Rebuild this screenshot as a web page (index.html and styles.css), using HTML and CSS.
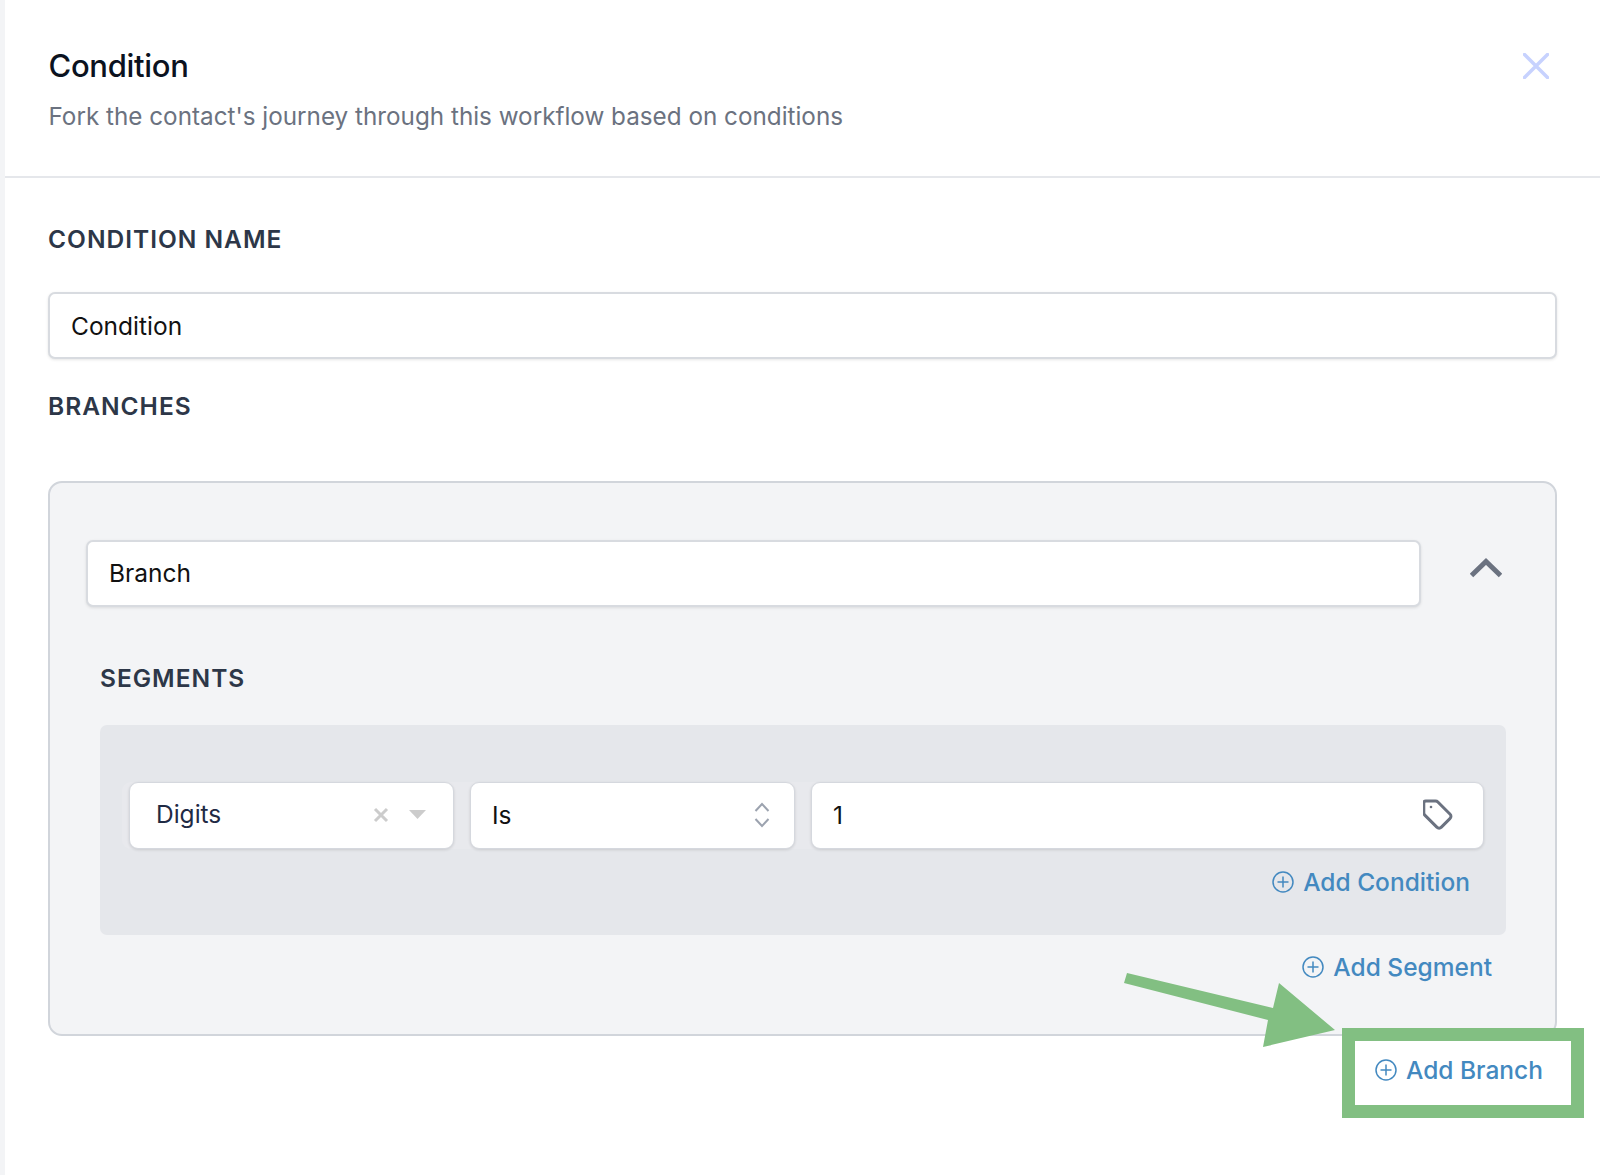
FILE: index.html
```html
<!DOCTYPE html>
<html lang="en">
<head>
<meta charset="utf-8">
<title>Condition</title>
<link rel="stylesheet" href="styles.css">
</head>
<body>
<main class="modal">
  <header class="head">
    <div>
      <h1 class="title">Condition</h1>
      <p class="sub">Fork the contact's journey through this workflow based on conditions</p>
    </div>
    <svg class="close" viewBox="0 0 26 26" aria-hidden="true"><path d="M1.5 1.5l23 23M24.5 1.5l-23 23"/></svg>
  </header>
  <section class="body">
    <div class="label">CONDITION NAME</div>
    <div class="field name">Condition</div>
    <div class="label branches">BRANCHES</div>
    <div class="panel">
      <div class="branch-row">
        <div class="field branch">Branch</div>
        <svg class="chev" viewBox="0 0 32 20" aria-hidden="true"><path d="M1.5 17.5L16 3.5l14.5 14"/></svg>
      </div>
      <div class="label segments">SEGMENTS</div>
      <div class="segbox">
        <div class="row">
          <div class="field sel digits">
            <span class="grow">Digits</span>
            <svg class="clear" viewBox="0 0 16 16" aria-hidden="true"><path d="M2 2l12 12M14 2L2 14"/></svg>
            <svg class="tri" viewBox="0 0 17 9" aria-hidden="true"><path d="M0 0h17L8.500 9z"/></svg>
          </div>
          <div class="field sel is">
            <span class="grow">Is</span>
            <svg class="sort" viewBox="0 0 16 26" aria-hidden="true"><path d="M1.500 9L8 2l6.500 7M1.500 17L8 24l6.500-7"/></svg>
          </div>
          <div class="field sel val">
            <span class="grow">1</span>
            <svg class="tag" viewBox="0 0 30 31" aria-hidden="true"><path d="M4 2h8.500c1 0 1.700.3 2.400 1l12 12c1.400 1.400 1.400 3.200 0 4.600l-8.500 8.500c-1.400 1.400-3.200 1.400-4.600 0l-12-12c-.7-.7-1-1.500-1-2.400V4c0-1.200.8-2 2-2h1.700z"/><circle class="dot" cx="8" cy="8" r="1.300"/></svg>
          </div>
        </div>
        <a class="add add-cond">
          <svg class="plus" viewBox="0 0 22 22" aria-hidden="true"><circle cx="11" cy="11" r="10"/><path d="M11 5.500v11M5.500 11h11"/></svg>
          Add Condition
        </a>
      </div>
      <a class="add add-seg">
        <svg class="plus" viewBox="0 0 22 22" aria-hidden="true"><circle cx="11" cy="11" r="10"/><path d="M11 5.500v11M5.500 11h11"/></svg>
        Add Segment
      </a>
    </div>
    <a class="add add-branch">
      <svg class="plus" viewBox="0 0 22 22" aria-hidden="true"><circle cx="11" cy="11" r="10"/><path d="M11 5.500v11M5.500 11h11"/></svg>
      Add Branch
    </a>
  </section>
</main>
<div class="callout-box"></div>
<svg class="callout-arrow" viewBox="0 0 1600 1175" aria-hidden="true"><path d="M1124 983l3-10 146 35 6-25 56 47-72 17 5-27z"/></svg>
</body>
</html>
```
FILE: styles.css
```css
* { box-sizing: border-box; }
html, body { margin: 0; padding: 0; }
body {
  width: 1600px;
  height: 1175px;
  overflow: hidden;
  background: #f3f4f6;
  font-family: Inter, "Liberation Sans", sans-serif;
  position: relative;
}
.modal {
  margin-left: 5px;
  height: 1175px;
  background: #fff;
}
.head {
  height: 178px;
  padding: 48px 51px 0 43.500px;
  border-bottom: 2px solid #e5e7eb;
  display: flex;
  justify-content: space-between;
  align-items: flex-start;
}
.title {
  margin: 0;
  font-size: 31px;
  line-height: 36px;
  font-weight: 500;
  letter-spacing: -0.3px;
  color: #0b1220;
}
.sub {
  margin: 18px 0 0;
  font-size: 24.250px;
  line-height: 30px;
  font-weight: 400;
  color: #6b7280;
}
.close { width: 26px; height: 26px; margin-top: 5px; fill: none; stroke: #c7d2fe; stroke-width: 3.500; stroke-linecap: round; }
.body { padding: 46px 43px 0 43px; position: relative; }
.label {
  font-size: 24.500px;
  line-height: 30px;
  font-weight: 600;
  letter-spacing: 1px;
  color: #2d3748;
}
.field {
  background: #fff;
  border: 2px solid #d8dbe0;
  border-radius: 7px;
  box-shadow: 0 1px 3px rgba(0,0,0,.1);
  font-size: 24.500px;
  color: #111;
  display: flex;
  align-items: center;
}
.name { margin-top: 38px; height: 67px; padding: 0 21px; }
.branches { margin-top: 32px; }
.panel {
  margin-top: 60px;
  height: 555px;
  background: #f3f4f6;
  border: 2px solid #d1d5db;
  border-radius: 14px;
  padding: 57px 27px 0 36px;
}
.branch-row { display: flex; align-items: flex-start; justify-content: space-between; }
.branch { width: 1335px; height: 67px; padding: 0 21px 1px; }
.chev { width: 32px; height: 20px; margin: 18px 26px 0 0; fill: none; stroke: #6b7280; stroke-width: 5; }
.segments { margin: 56px 0 0 14px; }
.segbox {
  margin: 32px 0 0 14px;
  height: 210px;
  width: 1406px;
  background: #e5e7eb;
  border-radius: 7px;
  padding: 57px 22px 0 22px;
}
.row { display: flex; gap: 16px; padding-left: 7px; background: #e8e9ed; border-radius: 9px; }
.sel { height: 67px; padding: 0 25px 2px 21px; border-width: 1px; border-color: #d5d8de; border-radius: 9px; box-shadow: 0 1px 3px rgba(0,0,0,.12); }
.digits { width: 325px; padding-left: 26px; padding-right: 27px; color: #1f2a44; }
.digits .grow { position: relative; top: -1px; }
.is { width: 325px; padding-right: 24px; }
.val { flex: 1; padding-right: 30px; }
.grow { flex: 1; }
.clear { width: 16px; height: 16px; fill: none; stroke: #ccc; stroke-width: 3; margin-right: 20px; }
.tri { width: 17px; height: 9px; fill: #ccc; }
.sort { width: 16px; height: 26px; fill: none; stroke: #9ca3af; stroke-width: 2; }
.tag { width: 30px; height: 31px; fill: none; stroke: #6b7280; stroke-width: 3; }
.tag .dot { fill: #6b7280; stroke: none; }
.add {
  display: flex;
  align-items: center;
  gap: 9px;
  justify-content: flex-end;
  font-size: 24.500px;
  line-height: 30px;
  font-weight: 500;
  color: #4389c0;
}
.plus { width: 22px; height: 22px; fill: none; stroke: #4389c0; stroke-width: 1.500; flex: none; }
.add-cond { margin-top: 18px; margin-right: 14px; }
.add-seg { margin-top: 17px; margin-right: 36px; }
.add-branch { margin-top: 19px; margin-right: 14px; }
.callout-box {
  position: absolute;
  left: 1342px;
  top: 1028px;
  width: 242px;
  height: 90px;
  border: 13px solid #82bf82;
}
.callout-arrow {
  position: absolute;
  left: 0;
  top: 0;
  width: 1600px;
  height: 1175px;
  fill: #82bf82;
  pointer-events: none;
}
```
